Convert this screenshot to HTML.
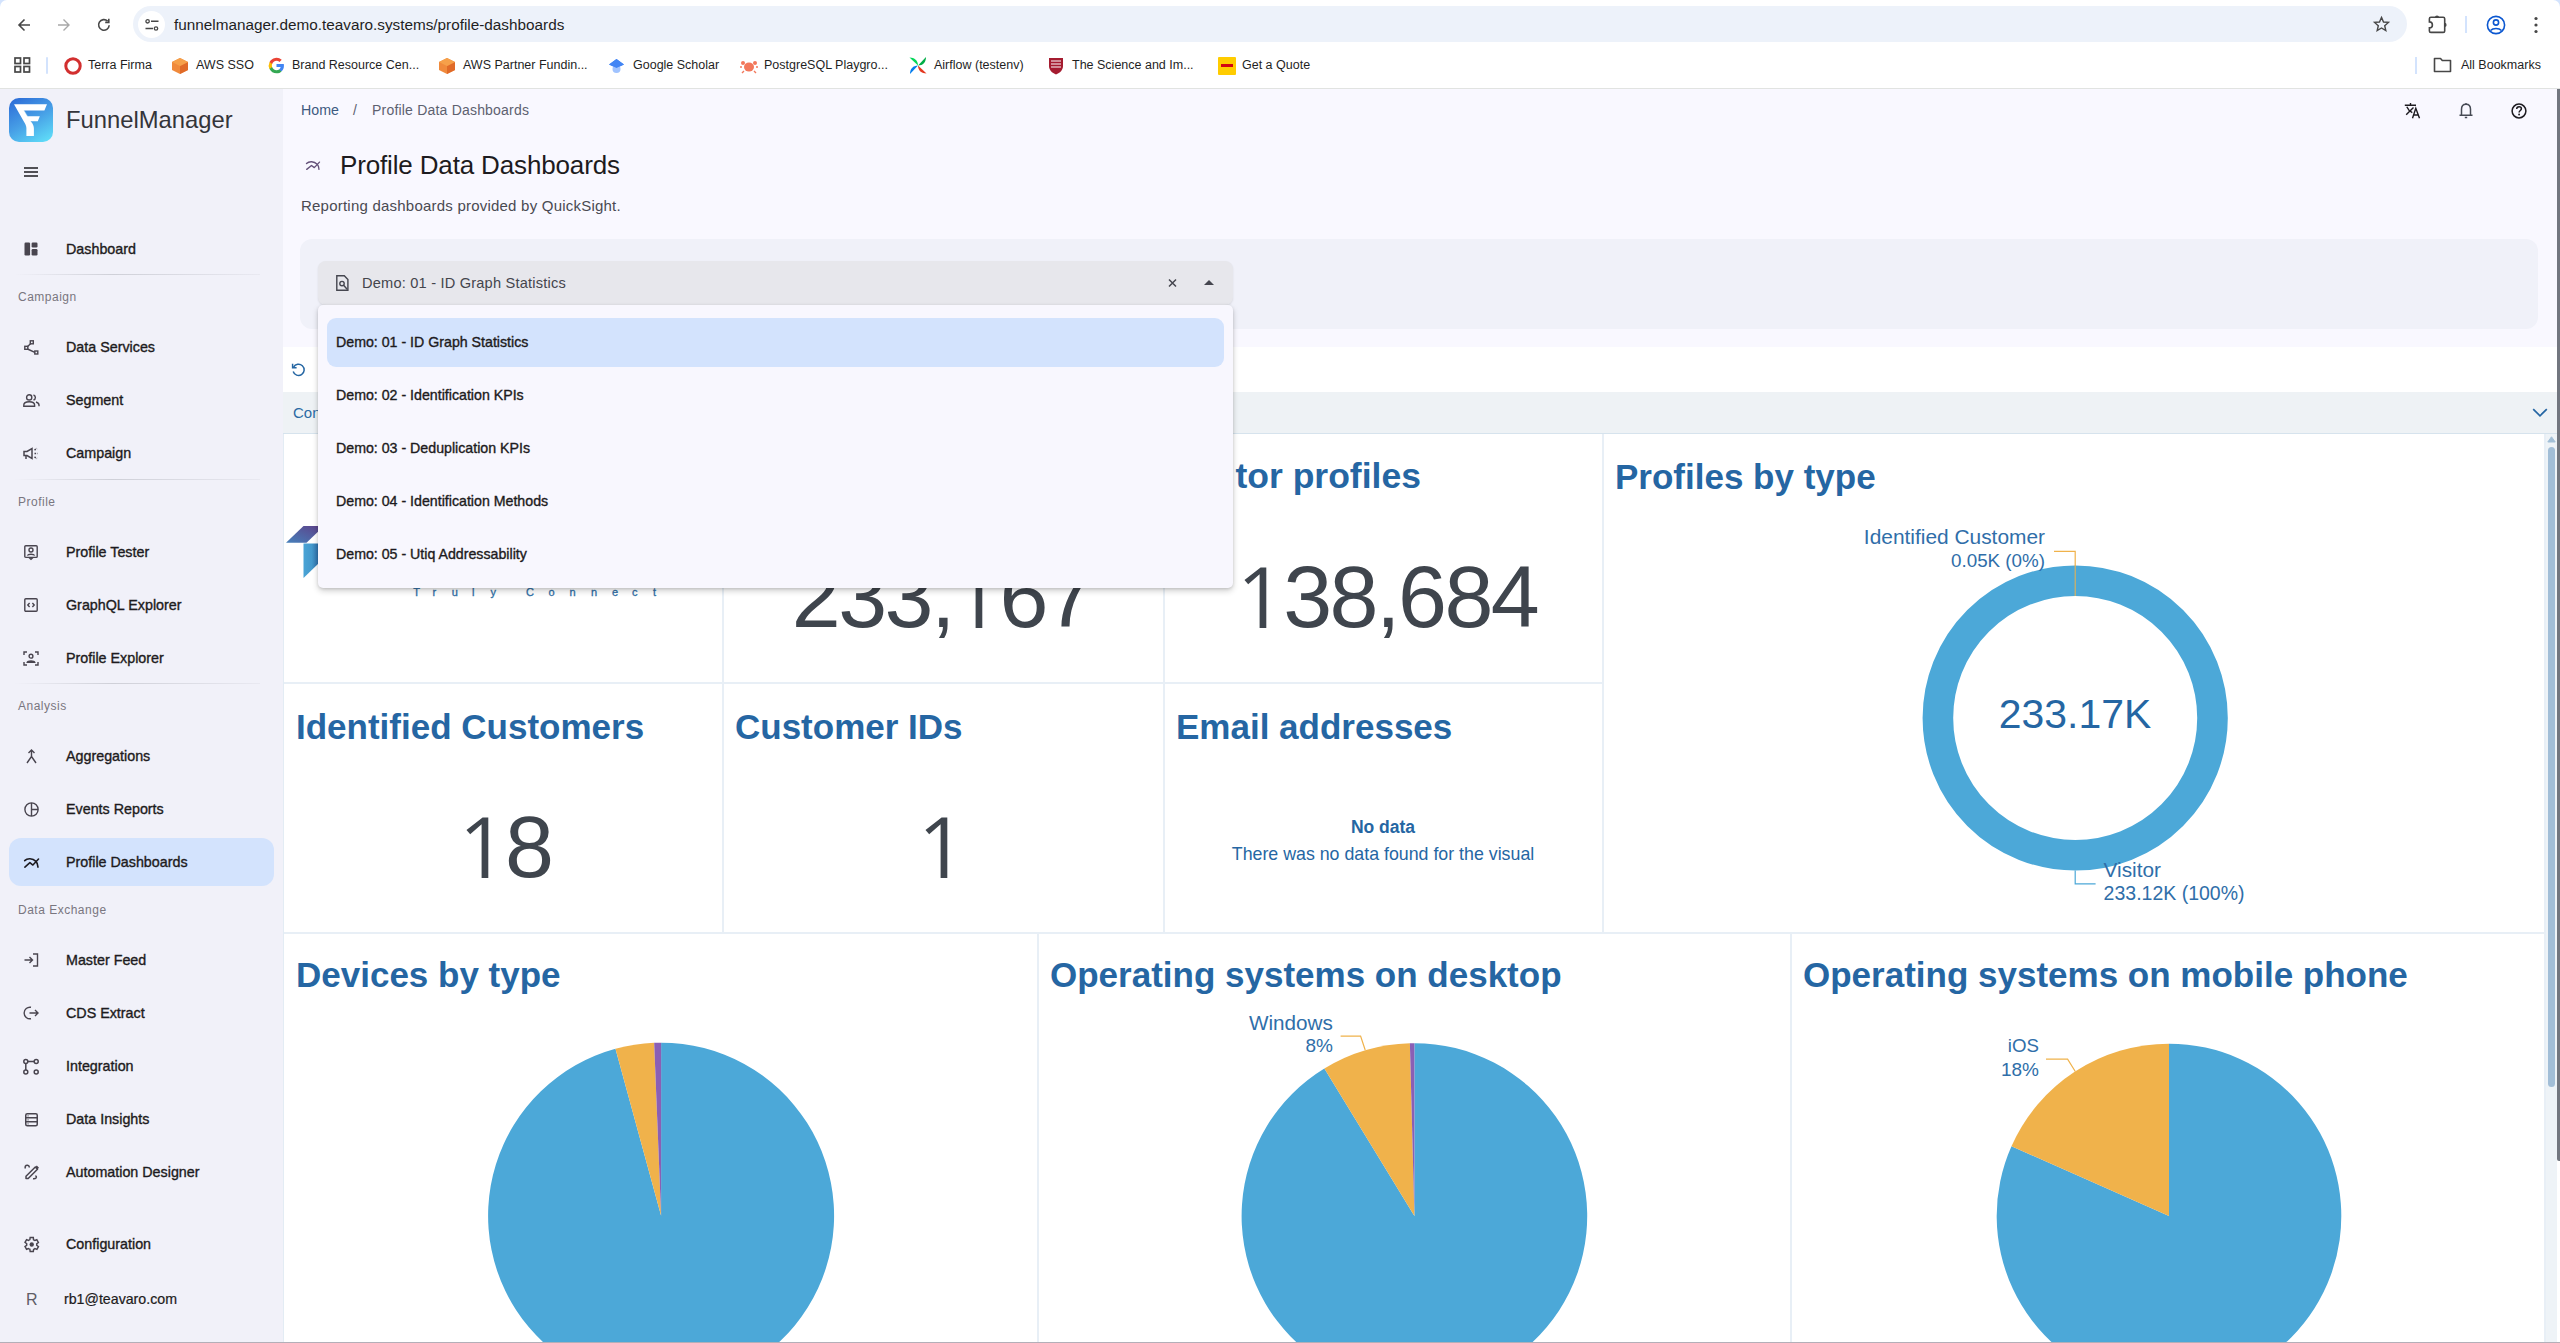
<!DOCTYPE html>
<html><head><meta charset="utf-8">
<style>
*{box-sizing:border-box;margin:0;padding:0}
html,body{width:2560px;height:1343px;overflow:hidden;background:#fff;font-family:"Liberation Sans",sans-serif;}
.a{position:absolute}
.t{position:absolute;white-space:nowrap;line-height:1}
svg{position:absolute;overflow:visible}
/* chrome */
#chrome{left:0;top:0;width:2560px;height:89px;background:#fff;border-bottom:1px solid #e1e3e1;border-radius:7px 7px 0 0}
#omni{left:133px;top:6px;width:2274px;height:36px;border-radius:18px;background:#edf2fa}
.bm{position:absolute;top:59.2px;font-size:12.5px;color:#1f1f1f;white-space:nowrap;line-height:1}
/* sidebar */
#side{left:0;top:89px;width:283px;height:1254px;background:#f1f1f9}
.ni{position:absolute;left:66px;font-size:14.5px;font-weight:bold;color:#1d1b20;white-space:nowrap;line-height:1}
.nl{position:absolute;left:18px;font-size:13.5px;color:#76757d;white-space:nowrap;line-height:1}
.ic{position:absolute;left:22px;width:18px;height:18px}
.div{position:absolute;left:18px;width:240px;height:1px;background:#dcdce3}
/* main */
#main{left:283px;top:89px;width:2277px;height:258px;background:#f9f8ff}
#qs{left:283px;top:347px;width:2274px;height:996px;background:#fff}
.qt{position:absolute;font-weight:bold;color:#2a6aa3;white-space:nowrap;line-height:1}
.num{position:absolute;color:#3f454d;white-space:nowrap;line-height:1}
.bl{position:absolute;background:#e5edf4}
</style></head>
<body>
<!-- ============ BROWSER CHROME ============ -->
<div class="a" style="left:0;top:0;width:10px;height:10px;background:#d3e3fd"></div><div class="a" style="left:2550px;top:0;width:10px;height:10px;background:#d3e3fd"></div>
<div id="chrome" class="a"></div>
<div id="omni" class="a"></div>
<!-- nav icons -->
<svg style="left:17px;top:18px" width="14" height="14" viewBox="0 0 14 14"><path d="M13 7H2M7.5 1.5L2 7l5.5 5.5" fill="none" stroke="#474747" stroke-width="1.6"/></svg>
<svg style="left:57px;top:18px" width="14" height="14" viewBox="0 0 14 14"><path d="M1 7h11M6.5 1.5L12 7l-5.5 5.5" fill="none" stroke="#a8a8a8" stroke-width="1.4"/></svg>
<svg style="left:97px;top:18px" width="14" height="14" viewBox="0 0 14 14"><path d="M12.2 7.3A5.3 5.3 0 1 1 10.6 3.1" fill="none" stroke="#474747" stroke-width="1.6"/><path d="M11.8 0.8v3.6H8.2" fill="none" stroke="#474747" stroke-width="1.6"/></svg>
<div class="a" style="left:138px;top:11px;width:27px;height:27px;border-radius:50%;background:#fff"></div>
<svg style="left:145px;top:19px" width="14" height="12" viewBox="0 0 14 12"><circle cx="2.6" cy="2.3" r="1.7" fill="none" stroke="#474747" stroke-width="1.3"/><path d="M6 2.3h7.5M0.5 9.5h7.5" stroke="#474747" stroke-width="1.4"/><circle cx="11" cy="9.5" r="1.7" fill="none" stroke="#474747" stroke-width="1.3"/></svg>
<div class="t" style="left:174px;top:17px;font-size:15.3px;color:#1f1f1f">funnelmanager.demo.teavaro.systems/profile-dashboards</div>
<!-- star -->
<svg style="left:2373px;top:16px" width="17" height="16" viewBox="0 0 24 23"><path d="M12 2l2.9 6.6 7.1.6-5.4 4.7 1.6 7-6.2-3.7-6.2 3.7 1.6-7L2 9.2l7.1-.6z" fill="none" stroke="#474747" stroke-width="2"/></svg>
<!-- extensions puzzle -->
<svg style="left:2428px;top:14px" width="20" height="20" viewBox="0 0 20 20"><path d="M2.9 3.3H15.2Q16.7 3.3 16.7 4.8V16.9Q16.7 18.4 15.2 18.4H2.9Q1.4 18.4 1.4 16.9V13.9A3 3 0 0 0 1.4 7.9V4.8Q1.4 3.3 2.9 3.3z" fill="none" stroke="#474747" stroke-width="1.6"/><path d="M6.9 3.5A2.1 2.1 0 0 1 11.1 3.5z" fill="#474747"/><path d="M16.5 8.8A2.1 2.1 0 0 1 16.5 13z" fill="#474747"/></svg>
<div class="a" style="left:2465px;top:16px;width:2px;height:17px;background:#d3e3fd"></div>
<svg style="left:2486px;top:15px" width="20" height="20" viewBox="0 0 20 20"><circle cx="10" cy="10" r="8.6" fill="none" stroke="#0b57d0" stroke-width="1.6"/><circle cx="10" cy="7.5" r="2.6" fill="none" stroke="#0b57d0" stroke-width="1.6"/><path d="M4.5 15.5c2.5-2.6 8.5-2.6 11 0" fill="none" stroke="#0b57d0" stroke-width="1.6"/></svg>
<svg style="left:2533px;top:16px" width="6" height="18" viewBox="0 0 6 18"><circle cx="3" cy="2.5" r="1.6" fill="#474747"/><circle cx="3" cy="9" r="1.6" fill="#474747"/><circle cx="3" cy="15.5" r="1.6" fill="#474747"/></svg>
<!-- bookmarks -->
<svg style="left:14px;top:57px" width="17" height="16" viewBox="0 0 17 16"><g fill="none" stroke="#474747" stroke-width="1.7"><rect x="1" y="1" width="5.5" height="5.5"/><rect x="10" y="1" width="5.5" height="5.5"/><rect x="1" y="9.5" width="5.5" height="5.5"/><rect x="10" y="9.5" width="5.5" height="5.5"/></g></svg>
<div class="a" style="left:46px;top:57px;width:2px;height:17px;background:#d3e3fd;border-radius:1px"></div>
<svg style="left:64px;top:57px" width="18" height="18" viewBox="0 0 18 18"><circle cx="9" cy="9" r="7.2" fill="none" stroke="#d22f2f" stroke-width="3"/><circle cx="9" cy="9" r="3.6" fill="#fff"/></svg>
<div class="bm" style="left:88px">Terra Firma</div>
<svg style="left:171px;top:57px" width="18" height="18" viewBox="0 0 18 18"><path d="M9 1l8 4v8l-8 4-8-4V5z" fill="#f08a3c"/><path d="M9 9l8-4v8l-8 4z" fill="#e06a28"/><path d="M9 1l8 4-8 4-8-4z" fill="#f6a04a"/></svg>
<div class="bm" style="left:196px">AWS SSO</div>
<svg style="left:268px;top:57px" width="17" height="17" viewBox="0 0 24 24"><path d="M22.5 12.2c0-.8-.1-1.5-.2-2.2H12v4.2h5.9a5 5 0 0 1-2.2 3.3v2.7h3.5c2.1-1.9 3.3-4.7 3.3-8z" fill="#4285f4"/><path d="M12 23c3 0 5.4-1 7.2-2.7l-3.5-2.7c-1 .7-2.2 1.1-3.7 1.1-2.9 0-5.3-1.9-6.2-4.5H2.2v2.8A11 11 0 0 0 12 23z" fill="#34a853"/><path d="M5.8 14.2a6.6 6.6 0 0 1 0-4.3V7.1H2.2a11 11 0 0 0 0 9.9z" fill="#fbbc05"/><path d="M12 5.4c1.6 0 3.1.6 4.2 1.7l3.2-3.2A11 11 0 0 0 2.2 7.1l3.6 2.8C6.7 7.3 9.1 5.4 12 5.4z" fill="#ea4335"/></svg>
<div class="bm" style="left:292px">Brand Resource Cen...</div>
<svg style="left:438px;top:57px" width="18" height="18" viewBox="0 0 18 18"><path d="M9 1l8 4v8l-8 4-8-4V5z" fill="#f08a3c"/><path d="M9 9l8-4v8l-8 4z" fill="#e06a28"/><path d="M9 1l8 4-8 4-8-4z" fill="#f6a04a"/></svg>
<div class="bm" style="left:463px">AWS Partner Fundin...</div>
<svg style="left:608px;top:58px" width="17" height="16" viewBox="0 0 17 16"><path d="M8.5 1L16 6.5 8.5 10 1 6.5z" fill="#4285f4"/><circle cx="8.5" cy="11" r="4" fill="#a0c3ff"/><path d="M8.5 1L16 6.5 8.5 10 1 6.5z" fill="#4285f4"/></svg>
<div class="bm" style="left:633px">Google Scholar</div>
<svg style="left:740px;top:57px" width="18" height="17" viewBox="0 0 18 17"><ellipse cx="9" cy="10" rx="5" ry="4.5" fill="#f2785c"/><circle cx="3" cy="6" r="2" fill="#f2785c"/><circle cx="15" cy="6" r="2" fill="#f2785c"/><path d="M4 14l-2 2M14 14l2 2M2 10H0M16 10h2" stroke="#f2785c" stroke-width="1.4"/></svg>
<div class="bm" style="left:764px">PostgreSQL Playgro...</div>
<svg style="left:909px;top:56px" width="18" height="19" viewBox="0 0 18 19"><path d="M9 9.5L1 18c0-5 3-8.5 8-8.5z" fill="#017cee"/><path d="M9 9.5L17 1c0 5-3 8.5-8 8.5z" fill="#00ad46"/><path d="M9 9.5L.5 1.5c5 0 8.5 3 8.5 8z" fill="#04d659"/><path d="M9 9.5l8.5 8c-5 0-8.5-3-8.5-8z" fill="#e43921"/></svg>
<div class="bm" style="left:934px">Airflow (testenv)</div>
<svg style="left:1048px;top:57px" width="16" height="18" viewBox="0 0 16 18"><path d="M1 1h14v8c0 4-3 7-7 8.5C4 16 1 13 1 9z" fill="#a51c30"/><path d="M3 4h10M3 7h10M3 10h10" stroke="#fff" stroke-width="1"/></svg>
<div class="bm" style="left:1072px">The Science and Im...</div>
<div class="a" style="left:1218px;top:57px;width:18px;height:18px;background:#ffcc00;border-radius:1px"></div>
<div class="a" style="left:1221px;top:64px;width:12px;height:3px;background:#d40511"></div>
<div class="bm" style="left:1242px">Get a Quote</div>
<div class="a" style="left:2415px;top:57px;width:2px;height:17px;background:#d3e3fd"></div>
<svg style="left:2433px;top:57px" width="19" height="16" viewBox="0 0 19 16"><path d="M1.5 1.5h6l1.8 2h8.2v11h-16z" fill="none" stroke="#474747" stroke-width="1.6" stroke-linejoin="round"/></svg>
<div class="bm" style="left:2461px">All Bookmarks</div>
<!-- ============ SIDEBAR ============ -->
<div id="side" class="a"></div>
<div class="a" style="left:9px;top:838px;width:265px;height:48px;border-radius:12px;background:#d3e3fd"></div>
<div class="a" style="left:9px;top:98px;width:44px;height:44px;border-radius:10px;background:linear-gradient(150deg,#2a68d6 0%,#479fe6 50%,#62e4fa 100%)"></div>
<svg style="left:9px;top:98px" width="44" height="44" viewBox="0 0 44 44"><path d="M5 6.3h33l-2.6 6.2H15.2l3.4 5.7h12.2l-2 5H21.5c2.6 2.5 3.4 5 3.4 7.2V38h-7.5V30c0-2.4-1.7-5-3-7.3L5 6.3z" fill="#fff"/><path d="M15.2 12.5l3.4 5.7M16.6 24.5" stroke="#7fc3ea" stroke-width="1" opacity="0.5"/></svg>
<div class="t" style="left:66px;top:108px;font-size:23.8px;color:#34343a">FunnelManager</div>
<svg style="left:24px;top:167px" width="14" height="10" viewBox="0 0 14 10"><path d="M0 1h14M0 5h14M0 9h14" stroke="#1d1b20" stroke-width="1.5"/></svg>
<div class="t" style="left:66px;top:241.9px;font-size:14.3px;color:#1d1b20;-webkit-text-stroke:0.35px #1d1b20">Dashboard</div>
<svg style="left:24px;top:242.0px" width="14" height="14" viewBox="0 0 14 14"><rect x="0.5" y="0.5" width="5.6" height="13" rx="1.2" fill="#49454f"/><rect x="7.6" y="0.5" width="5.9" height="5" rx="1.2" fill="#49454f"/><rect x="7.6" y="7" width="5.9" height="6.5" rx="1.2" fill="#49454f"/></svg>
<div class="a" style="left:14px;top:274px;width:246px;height:1px;background:linear-gradient(90deg,rgba(200,200,210,0),#cfd0d8 40%,rgba(200,200,210,0.2))"></div>
<div class="t" style="left:18px;top:291.3px;font-size:12px;letter-spacing:0.5px;color:#79767f">Campaign</div>
<div class="t" style="left:66px;top:339.9px;font-size:14.3px;color:#1d1b20;-webkit-text-stroke:0.35px #1d1b20">Data Services</div>
<svg style="left:24px;top:339.5px" width="15" height="15" viewBox="0 0 15 15"><g fill="none" stroke="#49454f" stroke-width="1.4"><rect x="6.3" y="0.8" width="3" height="3"/><rect x="0.8" y="6.3" width="3" height="3"/><rect x="10.8" y="11" width="3" height="3"/><path d="M6.8 3.5L3.3 6.8M3.5 9L10.8 12.4"/></g></svg>
<div class="t" style="left:66px;top:392.9px;font-size:14.3px;color:#1d1b20;-webkit-text-stroke:0.35px #1d1b20">Segment</div>
<svg style="left:23px;top:393.5px" width="17" height="13" viewBox="0 0 17 13"><g fill="none" stroke="#49454f" stroke-width="1.4"><circle cx="6.2" cy="3.4" r="2.6"/><path d="M0.8 12.2v-1.2c0-2 2.4-3.3 5.4-3.3s5.4 1.3 5.4 3.3v1.2z"/><path d="M10.5 1a2.6 2.6 0 0 1 0 5M13 8c1.8.6 3 1.6 3 3v1.2"/></g></svg>
<div class="t" style="left:66px;top:445.9px;font-size:14.3px;color:#1d1b20;-webkit-text-stroke:0.35px #1d1b20">Campaign</div>
<svg style="left:23px;top:446.5px" width="16" height="13" viewBox="0 0 16 13"><g fill="none" stroke="#49454f" stroke-width="1.5"><path d="M1 4.5h3l5-3v10l-5-3H1z"/><path d="M3 8.5v3.5"/><path d="M11.5 6.5h3M11.5 3l2.5-1.5M11.5 10l2.5 1.5" stroke-dasharray="1.6 1"/></g></svg>
<div class="a" style="left:14px;top:479px;width:246px;height:1px;background:linear-gradient(90deg,rgba(200,200,210,0),#cfd0d8 40%,rgba(200,200,210,0.2))"></div>
<div class="t" style="left:18px;top:495.6px;font-size:12px;letter-spacing:0.5px;color:#79767f">Profile</div>
<div class="t" style="left:66px;top:544.9px;font-size:14.3px;color:#1d1b20;-webkit-text-stroke:0.35px #1d1b20">Profile Tester</div>
<svg style="left:24px;top:544.5px" width="14" height="15" viewBox="0 0 14 15"><g fill="none" stroke="#49454f" stroke-width="1.4"><rect x="0.8" y="0.8" width="12.4" height="11.6" rx="1"/><circle cx="7" cy="5" r="2"/><path d="M3.3 10.5c1-1.6 6.4-1.6 7.4 0"/><path d="M5 12.4L7 14.2 9 12.4"/></g></svg>
<div class="t" style="left:66px;top:597.9px;font-size:14.3px;color:#1d1b20;-webkit-text-stroke:0.35px #1d1b20">GraphQL Explorer</div>
<svg style="left:24px;top:598.0px" width="14" height="14" viewBox="0 0 14 14"><g fill="none" stroke="#49454f" stroke-width="1.4"><rect x="0.8" y="0.8" width="12.4" height="12.4" rx="1"/><path d="M5.6 5L3.8 7l1.8 2M8.4 5l1.8 2-1.8 2"/></g></svg>
<div class="t" style="left:66px;top:650.9px;font-size:14.3px;color:#1d1b20;-webkit-text-stroke:0.35px #1d1b20">Profile Explorer</div>
<svg style="left:23px;top:650.5px" width="16" height="15" viewBox="0 0 16 15"><g fill="none" stroke="#49454f" stroke-width="1.4"><path d="M1 4V1h3M12 1h3v3M15 11v3h-3M4 14H1v-3"/><circle cx="8" cy="5.2" r="1.9"/><path d="M4.3 11.3c.6-1.8 6.8-1.8 7.4 0z"/></g></svg>
<div class="a" style="left:14px;top:683px;width:246px;height:1px;background:linear-gradient(90deg,rgba(200,200,210,0),#cfd0d8 40%,rgba(200,200,210,0.2))"></div>
<div class="t" style="left:18px;top:699.6px;font-size:12px;letter-spacing:0.5px;color:#79767f">Analysis</div>
<div class="t" style="left:66px;top:748.9px;font-size:14.3px;color:#1d1b20;-webkit-text-stroke:0.35px #1d1b20">Aggregations</div>
<svg style="left:26px;top:748.5px" width="11" height="15" viewBox="0 0 11 15"><g fill="none" stroke="#49454f" stroke-width="1.4"><path d="M2.5 4L5.5 1l3 3M5.5 1.5v6L1 14M5.5 7.5l4.5 6.5"/></g></svg>
<div class="t" style="left:66px;top:801.9px;font-size:14.3px;color:#1d1b20;-webkit-text-stroke:0.35px #1d1b20">Events Reports</div>
<svg style="left:24px;top:801.5px" width="15" height="15" viewBox="0 0 15 15"><g fill="none" stroke="#49454f" stroke-width="1.4"><circle cx="7.5" cy="7.5" r="6.6"/><path d="M7.5 1v13M7.5 7.5h6.6"/></g></svg>
<div class="t" style="left:66px;top:854.9px;font-size:14.3px;color:#1d1b20;-webkit-text-stroke:0.35px #1d1b20">Profile Dashboards</div>
<svg style="left:23.5px;top:857.5px" width="15" height="10" viewBox="0 0 14 9.4"><g fill="none" stroke="#1d1b20" stroke-width="1.5" stroke-linecap="round" stroke-linejoin="round"><path d="M0.6 2.5C3 0 8 0 11.2 3.2C12.3 4.2 12.8 6 13.1 8.6"/><path d="M0.8 8.6L5.5 4.4L8.3 6.6L13.6 1"/></g></svg>
<div class="t" style="left:18px;top:903.6px;font-size:12px;letter-spacing:0.5px;color:#79767f">Data Exchange</div>
<div class="t" style="left:66px;top:952.9px;font-size:14.3px;color:#1d1b20;-webkit-text-stroke:0.35px #1d1b20">Master Feed</div>
<svg style="left:24px;top:953.0px" width="15" height="14" viewBox="0 0 15 14"><g fill="none" stroke="#49454f" stroke-width="1.4"><path d="M9 1h4.5v12H9M0.5 7h8M5.5 4l3 3-3 3"/></g></svg>
<div class="t" style="left:66px;top:1005.9px;font-size:14.3px;color:#1d1b20;-webkit-text-stroke:0.35px #1d1b20">CDS Extract</div>
<svg style="left:24px;top:1006.0px" width="15" height="14" viewBox="0 0 15 14"><g fill="none" stroke="#49454f" stroke-width="1.4"><path d="M7 1.3A5.8 5.8 0 1 0 7 12.7M5.5 7h8.5M11 4l3 3-3 3"/></g></svg>
<div class="t" style="left:66px;top:1058.9px;font-size:14.3px;color:#1d1b20;-webkit-text-stroke:0.35px #1d1b20">Integration</div>
<svg style="left:23px;top:1058px" width="16" height="16" viewBox="0 0 16 16"><g fill="none" stroke="#49454f" stroke-width="1.5"><circle cx="2.8" cy="3.5" r="2"/><circle cx="13.2" cy="3.5" r="2"/><circle cx="2.8" cy="13.9" r="2"/><circle cx="13.2" cy="13.9" r="2"/><path d="M4.8 3.5h6.4M2.8 5.5v6.4"/></g></svg>
<div class="t" style="left:66px;top:1111.9px;font-size:14.3px;color:#1d1b20;-webkit-text-stroke:0.35px #1d1b20">Data Insights</div>
<svg style="left:25px;top:1113px" width="13" height="14" viewBox="0 0 13 14"><g fill="none" stroke="#49454f" stroke-width="1.5"><rect x="0.75" y="0.75" width="11.5" height="12" rx="1.5"/><path d="M0.75 4.8h11.5M0.75 8.8h11.5"/></g><path d="M2.6 2.8h.9M2.6 6.8h.9M2.6 10.8h.9" stroke="#49454f" stroke-width="1.2"/></svg>
<div class="t" style="left:66px;top:1164.9px;font-size:14.3px;color:#1d1b20;-webkit-text-stroke:0.35px #1d1b20">Automation Designer</div>
<svg style="left:24px;top:1163px" width="15" height="17" viewBox="0 0 15 17"><g fill="none" stroke="#49454f" stroke-width="1.5" stroke-linejoin="round"><path d="M2 15.5v-2.2L11.3 4l2.2 2.2-9.3 9.3z"/><path d="M1.5 5.5C0.5 4 1.5 2 3.5 2.2 5 2.4 5.5 3.5 5 4.5"/><path d="M9 15.8c1.5.2 3.2-.3 3.4-1.6.1-.8-.5-1.2-1-1.4"/></g><path d="M11.3 4l1.5-1.5 2.2 2.2-1.5 1.5z" fill="#49454f"/></svg>
<div class="t" style="left:66px;top:1236.9px;font-size:14.3px;color:#1d1b20;-webkit-text-stroke:0.35px #1d1b20">Configuration</div>
<svg style="left:23.5px;top:1236.5px" width="15" height="15" viewBox="3.6 2.4 18.2 19.2"><path d="M19.4 13a7.5 7.5 0 0 0 0-2l2.1-1.6-2-3.5-2.5 1a7 7 0 0 0-1.7-1L15 3h-4l-.4 2.7a7 7 0 0 0-1.7 1l-2.5-1-2 3.5L6.6 11a7.5 7.5 0 0 0 0 2l-2.2 1.6 2 3.5 2.5-1a7 7 0 0 0 1.7 1L11 21h4l.4-2.7a7 7 0 0 0 1.7-1l2.5 1 2-3.5z" fill="none" stroke="#49454f" stroke-width="1.9"/><circle cx="13" cy="12" r="2.8" fill="#49454f"/></svg>
<div class="t" style="left:26px;top:1291.8px;font-size:16px;color:#5f5d66">R</div>
<div class="t" style="left:64px;top:1291.7px;font-size:14.2px;color:#1d1b20;-webkit-text-stroke:0.2px #1d1b20">rb1@teavaro.com</div>
<!-- ============ MAIN HEADER ============ -->
<div id="main" class="a"></div>
<div class="t" style="left:301px;top:103.4px;font-size:14.2px;color:#3d5a80">Home</div>
<div class="t" style="left:353px;top:103.4px;font-size:14px;color:#5d6170">/</div>
<div class="t" style="left:372px;top:103.4px;font-size:14px;letter-spacing:0.2px;color:#5d6170">Profile Data Dashboards</div>
<svg style="left:2404px;top:103px" width="17" height="16" viewBox="0 0 17 16"><g fill="none" stroke="#1d1b20" stroke-width="1.4"><path d="M0.8 2.3h11.2M6.5 0v2.3M2.2 11.7L9.5 4.5"/><path d="M2.8 3.7c1.3 3 3 4.8 5.5 6" /><path d="M8.5 15.3l3.3-10 3.7 10M9.8 12h4.2"/></g></svg>
<svg style="left:2459px;top:103px" width="14" height="16" viewBox="0 0 14 16"><g fill="none" stroke="#474b55" stroke-width="1.5"><path d="M7 1.3c-2.8 0-4.5 2.2-4.5 5v6H0.5M7 1.3c2.8 0 4.5 2.2 4.5 5v6h2M0.5 12.3h13"/></g><path d="M5.8 14.5h2.4" stroke="#474b55" stroke-width="1.5"/><circle cx="7" cy="1" r="0.9" fill="#474b55"/></svg>
<svg style="left:2511px;top:103px" width="16" height="16" viewBox="0 0 16 16"><circle cx="8" cy="8" r="6.9" fill="none" stroke="#1d1b20" stroke-width="1.5"/><path d="M5.7 6c0-1.4 1-2.3 2.4-2.3s2.3.9 2.3 2.1c0 1.6-2.3 1.8-2.3 3.6" fill="none" stroke="#1d1b20" stroke-width="1.5"/><circle cx="8.1" cy="11.5" r="0.95" fill="#1d1b20"/></svg>
<svg style="left:306px;top:161px" width="14" height="9.4" viewBox="0 0 14 9.4"><g fill="none" stroke="#65527a" stroke-width="1.35" stroke-linecap="round" stroke-linejoin="round"><path d="M0.5 2.5C3 0 8 0 11.2 3.2C12.3 4.2 12.8 6 13 8.4"/><path d="M0.7 8.4L5.5 4.5L8.3 6.6L13.5 1.1"/></g></svg>
<div class="t" style="left:340px;top:152.4px;font-size:26px;letter-spacing:-0.15px;color:#1d1b20">Profile Data Dashboards</div>
<div class="t" style="left:301px;top:198.1px;font-size:15px;letter-spacing:0.22px;color:#4a4a52">Reporting dashboards provided by QuickSight.</div>
<div class="a" style="left:300px;top:239px;width:2238px;height:90px;border-radius:12px;background:#f0f1f9"></div>
<div class="a" style="left:318px;top:261px;width:915px;height:44px;border-radius:8px;background:#e7e7ec;box-shadow:0 1px 2px rgba(0,0,0,0.1)"></div>
<svg style="left:336px;top:275px" width="13" height="16" viewBox="0 0 13 16"><g fill="none" stroke="#45464f" stroke-width="1.4"><path d="M0.8 0.8h7.5l3.6 3.8v10.6H0.8z"/><circle cx="6" cy="8.6" r="2.2"/><path d="M7.6 10.3l3.5 4"/></g></svg>
<div class="t" style="left:362px;top:276.4px;font-size:14.6px;letter-spacing:0.2px;color:#44454c">Demo: 01 - ID Graph Statistics</div>
<svg style="left:1168px;top:279px" width="9" height="8" viewBox="0 0 9 8"><path d="M1 0.5l7 7M8 0.5l-7 7" stroke="#45464f" stroke-width="1.5"/></svg>
<svg style="left:1204px;top:280px" width="10" height="5" viewBox="0 0 10 5"><path d="M0 5L5 0l5 5z" fill="#45464f"/></svg>
<!-- ============ QUICKSIGHT ============ -->
<div class="a" style="left:283px;top:347px;width:2274px;height:45px;background:#fff"></div>
<svg style="left:291px;top:362px" width="15" height="15" viewBox="0 0 15 15"><path d="M2.6 5.2A5.6 5.6 0 1 1 2.2 9.5" fill="none" stroke="#2566a3" stroke-width="1.5"/><path d="M1.6 1.8v4h4" fill="none" stroke="#2566a3" stroke-width="1.5"/></svg>
<div class="a" style="left:283px;top:392px;width:2274px;height:42px;background:#eef2f5;border-bottom:1px solid #d6e3ed"></div>
<div class="t" style="left:293px;top:405.3px;font-size:15px;color:#2a6aa3">Controls</div>
<svg style="left:2532px;top:408px" width="16" height="9" viewBox="0 0 16 9"><path d="M1.2 1.2l6.8 6.6 6.8-6.6" fill="none" stroke="#2566a3" stroke-width="1.7"/></svg>
<div class="a" style="left:283px;top:434px;width:1px;height:909px;background:#e3ecf4"></div>
<div class="a" style="left:722px;top:434px;width:2px;height:499px;background:#e8eff6"></div>
<div class="a" style="left:1163px;top:434px;width:2px;height:499px;background:#e8eff6"></div>
<div class="a" style="left:1602px;top:434px;width:2px;height:499px;background:#e8eff6"></div>
<div class="a" style="left:2544px;top:434px;width:2px;height:909px;background:#e8eff6"></div>
<div class="a" style="left:284px;top:682px;width:1319px;height:2px;background:#e8eff6"></div>
<div class="a" style="left:284px;top:932px;width:2261px;height:2px;background:#e8eff6"></div>
<div class="a" style="left:1037px;top:933px;width:2px;height:410px;background:#e8eff6"></div>
<div class="a" style="left:1790px;top:933px;width:2px;height:410px;background:#e8eff6"></div>
<div class="a" style="left:2546px;top:434px;width:11px;height:909px;background:#eef3f7"></div>
<svg style="left:2547px;top:436px" width="9" height="7" viewBox="0 0 9 7"><path d="M0.8 6L4.5 0.8 8.2 6z" fill="#a2bfd7" stroke="#a2bfd7" stroke-width="1" stroke-linejoin="round"/></svg>
<div class="a" style="left:2548px;top:447px;width:7px;height:640px;border-radius:3.5px;background:#a2bed7"></div>
<div class="a" style="left:2557px;top:89px;width:3px;height:1072px;border-radius:0 0 0 2px;background:#72767f"></div>
<div class="t" style="left:1235.5px;top:459.4px;font-size:35.5px;font-weight:bold;color:#2566a3">tor profiles</div>
<div class="t" style="left:1615px;top:459.4px;font-size:35px;font-weight:bold;color:#2566a3">Profiles by type</div>
<div class="t" style="left:296px;top:709.1px;font-size:35px;font-weight:bold;color:#2566a3">Identified Customers</div>
<div class="t" style="left:735px;top:709.1px;font-size:35px;font-weight:bold;color:#2566a3">Customer IDs</div>
<div class="t" style="left:1176px;top:709.1px;font-size:35px;font-weight:bold;color:#2566a3">Email addresses</div>
<div class="t" style="left:296px;top:957.2px;font-size:35px;font-weight:bold;color:#2566a3">Devices by type</div>
<div class="t" style="left:1050px;top:957.2px;font-size:35px;font-weight:bold;color:#2566a3">Operating systems on desktop</div>
<div class="t" style="left:1803px;top:957.2px;font-size:35px;font-weight:bold;color:#2566a3">Operating systems on mobile phone</div>
<div class="t" style="left:735px;top:459.4px;font-size:35px;font-weight:bold;color:#2566a3">Total profiles</div>
<div class="t" style="left:442px;width:1000px;text-align:center;top:553.4px;font-size:88px;letter-spacing:-2.5px;color:#3f454d">233,<span style="position:relative;color:transparent">1<svg style="left:0;top:0" width="48" height="99" viewBox="0 0 48 99"><polygon points="23.6,20.5 29.3,20.5 29.3,81.1 22.6,81.1 22.6,27.2 11.2,37.2 7.5,32.9" fill="#3f454d"/></svg></span>67</div>
<div class="t" style="left:887px;width:1000px;text-align:center;top:553.4px;font-size:88px;letter-spacing:-2.5px;color:#3f454d"><span style="position:relative;color:transparent">1<svg style="left:0;top:0" width="48" height="99" viewBox="0 0 48 99"><polygon points="23.6,20.5 29.3,20.5 29.3,81.1 22.6,81.1 22.6,27.2 11.2,37.2 7.5,32.9" fill="#3f454d"/></svg></span>38,684</div>
<div class="t" style="left:5px;width:1000px;text-align:center;top:803.4px;font-size:88px;letter-spacing:-2.5px;color:#3f454d"><span style="position:relative;color:transparent">1<svg style="left:0;top:0" width="48" height="99" viewBox="0 0 48 99"><polygon points="23.6,20.5 29.3,20.5 29.3,81.1 22.6,81.1 22.6,27.2 11.2,37.2 7.5,32.9" fill="#3f454d"/></svg></span>8</div>
<div class="t" style="left:441px;width:1000px;text-align:center;top:803.4px;font-size:88px;letter-spacing:-2.5px;color:#3f454d"><span style="position:relative;color:transparent">1<svg style="left:0;top:0" width="48" height="99" viewBox="0 0 48 99"><polygon points="23.6,20.5 29.3,20.5 29.3,81.1 22.6,81.1 22.6,27.2 11.2,37.2 7.5,32.9" fill="#3f454d"/></svg></span></div>
<div class="t" style="left:883px;width:1000px;text-align:center;top:819.0px;font-size:17.5px;font-weight:bold;color:#2566a3">No data</div>
<div class="t" style="left:883px;width:1000px;text-align:center;top:845.5px;font-size:17.8px;color:#2566a3">There was no data found for the visual</div>
<svg style="left:284px;top:520px" width="40" height="62" viewBox="284 520 40 62"><defs><linearGradient id="tg1" x1="0" y1="1" x2="1" y2="0"><stop offset="0" stop-color="#4680bb"/><stop offset="1" stop-color="#5e3f87"/></linearGradient><linearGradient id="tg2" x1="0" y1="0" x2="1" y2="0"><stop offset="0" stop-color="#4aa4d6"/><stop offset="0.5" stop-color="#4499cc"/><stop offset="1" stop-color="#2b67a3"/></linearGradient></defs><path d="M286 542.7L303.5 525.9H324L306.5 542.7z" fill="url(#tg1)"/><path d="M303.5 543.5H320V562L303.5 578z" fill="url(#tg2)"/></svg>
<div class="t" style="left:413.2px;top:586.6px;font-size:11px;color:#2f6ea5;-webkit-text-stroke:0.3px #2f6ea5">T</div>
<div class="t" style="left:432.5px;top:586.6px;font-size:11px;color:#2f6ea5;-webkit-text-stroke:0.3px #2f6ea5">r</div>
<div class="t" style="left:451.8px;top:586.6px;font-size:11px;color:#2f6ea5;-webkit-text-stroke:0.3px #2f6ea5">u</div>
<div class="t" style="left:471.9px;top:586.6px;font-size:11px;color:#2f6ea5;-webkit-text-stroke:0.3px #2f6ea5">l</div>
<div class="t" style="left:490.5px;top:586.6px;font-size:11px;color:#2f6ea5;-webkit-text-stroke:0.3px #2f6ea5">y</div>
<div class="t" style="left:526.1px;top:586.6px;font-size:11px;color:#2f6ea5;-webkit-text-stroke:0.3px #2f6ea5">C</div>
<div class="t" style="left:548.5px;top:586.6px;font-size:11px;color:#2f6ea5;-webkit-text-stroke:0.3px #2f6ea5">o</div>
<div class="t" style="left:569.4px;top:586.6px;font-size:11px;color:#2f6ea5;-webkit-text-stroke:0.3px #2f6ea5">n</div>
<div class="t" style="left:591.0px;top:586.6px;font-size:11px;color:#2f6ea5;-webkit-text-stroke:0.3px #2f6ea5">n</div>
<div class="t" style="left:611.9px;top:586.6px;font-size:11px;color:#2f6ea5;-webkit-text-stroke:0.3px #2f6ea5">e</div>
<div class="t" style="left:632.0px;top:586.6px;font-size:11px;color:#2f6ea5;-webkit-text-stroke:0.3px #2f6ea5">c</div>
<div class="t" style="left:652.9px;top:586.6px;font-size:11px;color:#2f6ea5;-webkit-text-stroke:0.3px #2f6ea5">t</div>
<svg style="left:0;top:0" width="2560" height="1343" viewBox="0 0 2560 1343"><circle cx="2075.2" cy="718" r="137.3" fill="none" stroke="#4ca8d8" stroke-width="30.6"/><path d="M2075.2 565.5V596" stroke="#f0b24b" stroke-width="1"/><path d="M2075.2 566V551.3H2054" fill="none" stroke="#f0b24b" stroke-width="1.2"/><path d="M2075.2 870.5V883.8H2095.6" fill="none" stroke="#4ca8d8" stroke-width="1.2"/></svg>
<div class="t" style="left:1045px;width:1000px;text-align:right;top:526.7px;font-size:20.9px;color:#2f6ea9">Identified Customer</div>
<div class="t" style="left:1045px;width:1000px;text-align:right;top:551.7px;font-size:18.8px;color:#2f6ea9">0.05K (0%)</div>
<div class="t" style="left:1575px;width:1000px;text-align:center;top:693.8px;font-size:40.9px;color:#2566a3">233.17K</div>
<div class="t" style="left:2103.6px;top:859.6px;font-size:20.8px;color:#2f6ea9">Visitor</div>
<div class="t" style="left:2103.6px;top:884.0px;font-size:19.5px;color:#2f6ea9">233.12K (100%)</div>
<svg style="left:0;top:0" width="2560" height="1343" viewBox="0 0 2560 1343"><path d="M661.10 1215.70L661.10 1042.70A173 173 0 1 1 615.45 1048.83z" fill="#4ca8d8"/><path d="M661.10 1215.70L615.45 1048.83A173 173 0 0 1 654.16 1042.84z" fill="#f0b24b"/><path d="M661.10 1215.70L654.16 1042.84A173 173 0 0 1 661.10 1042.70z" fill="#8a5fb5"/><path d="M1414.40 1216.00L1414.40 1043.20A172.8 172.8 0 1 1 1324.37 1068.51z" fill="#4ca8d8"/><path d="M1414.40 1216.00L1324.37 1068.51A172.8 172.8 0 0 1 1409.88 1043.26z" fill="#f0b24b"/><path d="M1414.40 1216.00L1409.88 1043.26A172.8 172.8 0 0 1 1414.40 1043.20z" fill="#8a5fb5"/><path d="M2169.00 1216.00L2169.00 1043.70A172.3 172.3 0 1 1 2011.47 1146.19z" fill="#4ca8d8"/><path d="M2169.00 1216.00L2011.47 1146.19A172.3 172.3 0 0 1 2169.00 1043.70z" fill="#f0b24b"/><path d="M1365.2 1050L1360.6 1036.1H1340.6" fill="none" stroke="#f0b24b" stroke-width="1.2"/><path d="M2075.3 1071.5L2067.6 1059.2H2046" fill="none" stroke="#f0b24b" stroke-width="1.2"/></svg>
<div class="t" style="left:332.9px;width:1000px;text-align:right;top:1012.5px;font-size:20.7px;color:#2f6ea9">Windows</div>
<div class="t" style="left:332.9px;width:1000px;text-align:right;top:1036.3px;font-size:19px;color:#2f6ea9">8%</div>
<div class="t" style="left:1039px;width:1000px;text-align:right;top:1037.2px;font-size:18.7px;color:#2f6ea9">iOS</div>
<div class="t" style="left:1039px;width:1000px;text-align:right;top:1060.0px;font-size:19px;color:#2f6ea9">18%</div>
<div class="a" style="left:0;top:1342px;width:2560px;height:1px;background:#b3afb8;z-index:20"></div>


<!-- ============ DROPDOWN ============ -->
<div class="a" style="left:318px;top:305px;width:915px;height:283px;border-radius:5px;background:#f8f7fe;box-shadow:0 3px 6px rgba(0,0,0,0.18),0 1px 3px rgba(0,0,0,0.12);z-index:10"></div>
<div class="a" style="left:327px;top:318px;width:897px;height:49px;border-radius:9px;background:#d3e3fd;z-index:11"></div>
<div class="t" style="left:336px;top:335.1px;font-size:14.2px;color:#1d1b20;-webkit-text-stroke:0.35px #1d1b20;z-index:12">Demo: 01 - ID Graph Statistics</div>
<div class="t" style="left:336px;top:388.1px;font-size:14.2px;color:#1d1b20;-webkit-text-stroke:0.35px #1d1b20;z-index:12">Demo: 02 - Identification KPIs</div>
<div class="t" style="left:336px;top:441.1px;font-size:14.2px;color:#1d1b20;-webkit-text-stroke:0.35px #1d1b20;z-index:12">Demo: 03 - Deduplication KPIs</div>
<div class="t" style="left:336px;top:494.1px;font-size:14.2px;color:#1d1b20;-webkit-text-stroke:0.35px #1d1b20;z-index:12">Demo: 04 - Identification Methods</div>
<div class="t" style="left:336px;top:547.1px;font-size:14.2px;color:#1d1b20;-webkit-text-stroke:0.35px #1d1b20;z-index:12">Demo: 05 - Utiq Addressability</div>
</body></html>
